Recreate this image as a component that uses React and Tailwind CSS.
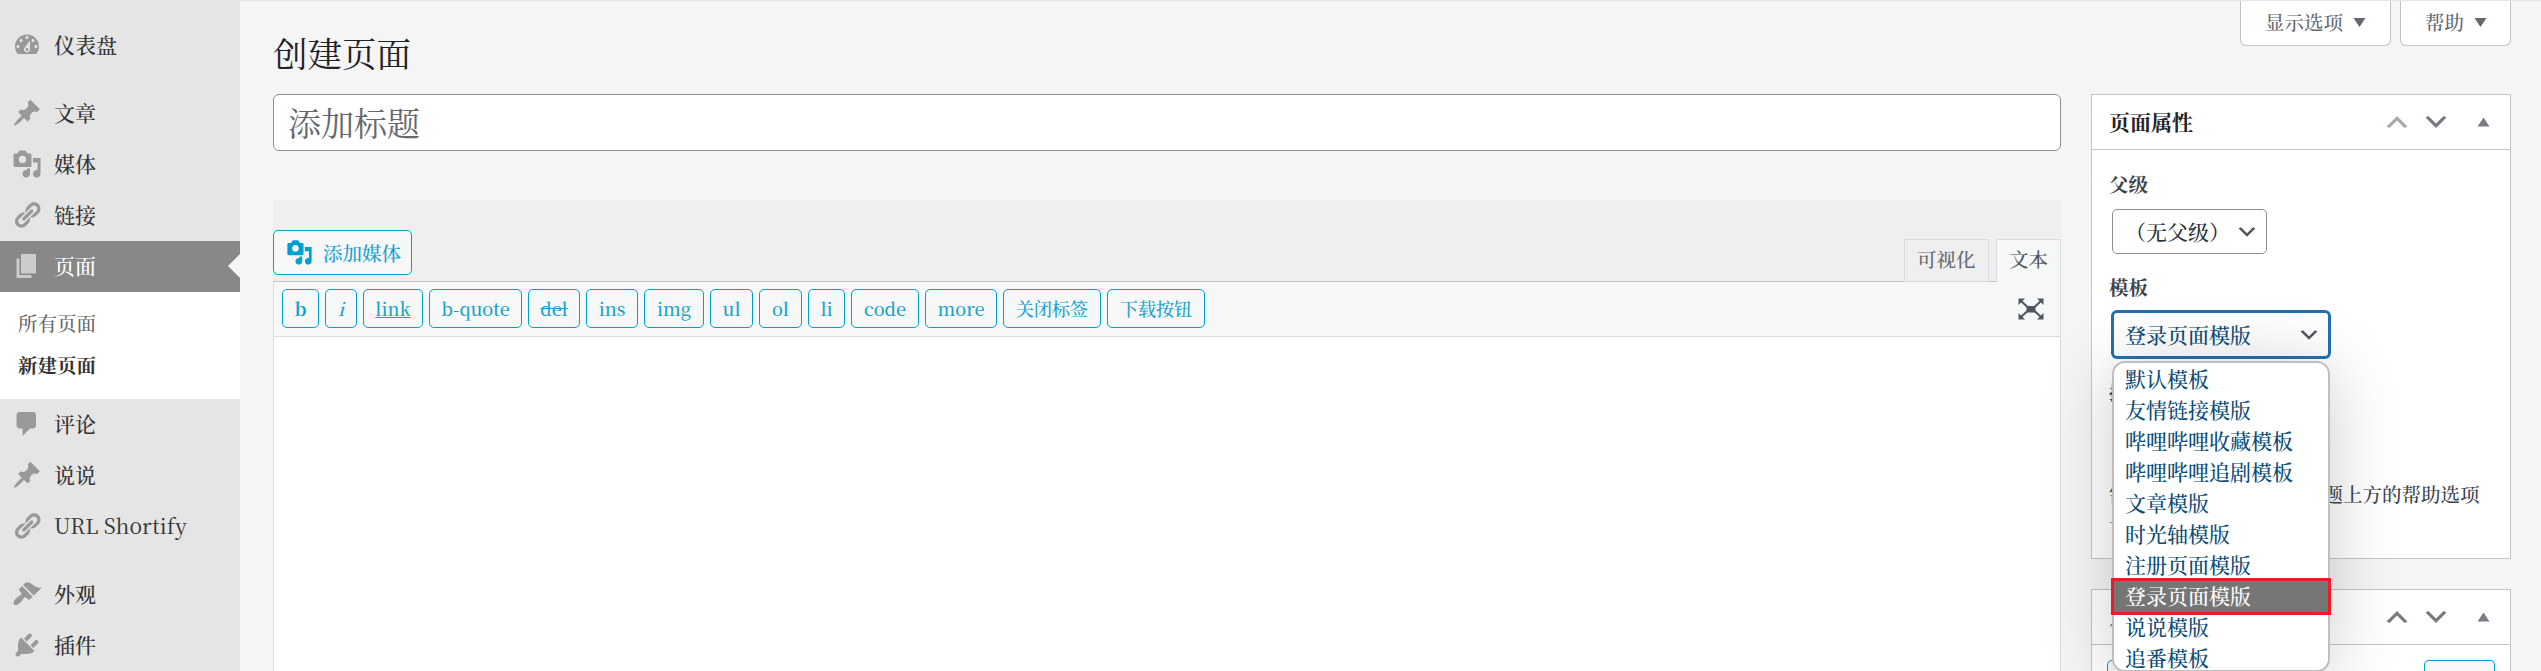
const PATHS = {
  dashboard:
    "M3.76 16h12.48c1.1-1.37 1.76-3.11 1.76-5 0-4.42-3.58-8-8-8s-8 3.58-8 8c0 1.89.66 3.63 1.76 5zM10 4c.55 0 1 .45 1 1s-.45 1-1 1-1-.45-1-1 .45-1 1-1zM6 6c.55 0 1 .45 1 1s-.45 1-1 1-1-.45-1-1 .45-1 1-1zm8 0c.55 0 1 .45 1 1s-.45 1-1 1-1-.45-1-1 .45-1 1-1zm-5.37 5.55L12 7v6c0 1.1-.9 2-2 2s-2-.9-2-2c0-.57.24-1.08.63-1.45zM4 10c.55 0 1 .45 1 1s-.45 1-1 1-1-.45-1-1 .45-1 1-1zm12 0c.55 0 1 .45 1 1s-.45 1-1 1-1-.45-1-1 .45-1 1-1zm-5 3c0-.55-.45-1-1-1s-1 .45-1 1 .45 1 1 1 1-.45 1-1z",
  pin: "M10.44 3.02l1.82-1.82 6.36 6.35-1.83 1.82c-1.05-.68-2.48-.57-3.41.36l-.75.75c-.92.93-1.04 2.35-.35 3.41l-1.83 1.82-2.41-2.41-2.8 2.79c-.42.42-3.38 2.71-3.8 2.29s1.86-3.39 2.28-3.81l2.79-2.79L4.1 9.36l1.83-1.82c1.05.69 2.48.57 3.4-.36l.75-.75c.93-.92 1.05-2.35.36-3.41z",
  media:
    "M13 11V4c0-.55-.45-1-1-1h-1.67L9 1H5L3.67 3H2c-.55 0-1 .45-1 1v7c0 .55.45 1 1 1h10c.55 0 1-.45 1-1zM7 4.5c1.38 0 2.5 1.12 2.5 2.5S8.38 9.5 7 9.5 4.5 8.38 4.5 7 5.62 4.5 7 4.5zM14 6h5v10.5c0 1.38-1.12 2.5-2.5 2.5S14 17.88 14 16.5s1.12-2.5 2.5-2.5c.17 0 .34.02.5.05V9h-3V6zm-4 8.05V13h2v3.5c0 1.38-1.12 2.5-2.5 2.5S7 17.88 7 16.5 8.12 14 9.5 14c.17 0 .34.02.5.05z",
  link: "M17.74 2.76c1.68 1.69 1.68 4.41 0 6.1l-1.53 1.52c-1.12 1.12-2.7 1.47-4.14 1.09l2.62-2.61.76-.77.76-.76c.84-.84.84-2.2 0-3.04-.84-.85-2.2-.85-3.04 0l-.77.76-3.38 3.38c-.37-1.44-.02-3.02 1.1-4.14l1.52-1.53c1.69-1.68 4.42-1.68 6.1 0zM8.59 13.43l5.34-5.34c.42-.42.42-1.1 0-1.52-.44-.43-1.13-.39-1.53 0l-5.33 5.34c-.42.42-.42 1.1 0 1.52.44.43 1.13.39 1.52 0zm-.76 2.29l4.14-4.15c.38 1.44.03 3.02-1.09 4.14l-1.52 1.53c-1.69 1.68-4.41 1.68-6.1 0-1.68-1.68-1.68-4.42 0-6.1l1.53-1.52c1.12-1.12 2.7-1.47 4.14-1.1l-4.14 4.15c-.85.84-.85 2.2 0 3.05.84.84 2.2.84 3.04 0z",
  page: "M6 15V2h10v13H6zm-1 1h8v2H3V5h2v11z",
  comment:
    "M5 2h9c1.1 0 2 .9 2 2v7c0 1.1-.9 2-2 2h-2l-5 5v-5H5c-1.1 0-2-.9-2-2V4c0-1.1.9-2 2-2z",
  brush:
    "M14.48 11.06L7.41 3.99l1.5-1.5c.5-.56 2.3-.47 3.51.32 1.21.8 1.43 1.28 2.91 2.1 1.18.64 2.45 1.26 4.45.85zm-.71.71L6.7 4.7 4.93 6.47c-.39.39-.39 1.02 0 1.41l1.06 1.06c.39.39.39 1.03 0 1.42-.6.6-1.43 1.11-2.21 1.69-.35.26-.7.53-1.01.84C1.43 14.23.4 16.08 1.4 17.07c.99 1 2.84-.03 4.18-1.36.31-.31.58-.66.85-1.02.57-.78 1.08-1.61 1.69-2.21.39-.39 1.02-.39 1.41 0l1.06 1.06c.39.39 1.02.39 1.41 0z",
  plug: "M13.11 4.36L9.87 7.6 8 5.73l3.24-3.24c.35-.34 1.05-.2 1.56.32.52.51.66 1.21.31 1.55zm-8 1.77l.91-1.12 9.01 9.01-1.19.84c-.71.71-2.63 1.16-3.82 1.16H6.14L4.9 17.26c-.59.59-1.54.59-2.12 0-.59-.58-.59-1.53 0-2.12l1.24-1.24v-3.88c0-1.13.4-3.19 1.09-3.89zm7.26 3.97l3.24-3.24c.34-.35 1.04-.21 1.55.31.52.51.66 1.21.31 1.55l-3.24 3.25z",
  down: "M5 6l5 5 5-5 2 1-7 7-7-7z",
  up: "M15 14l-5-5-5 5-2-1 7-7 7 7z",
  caretUp: "M7 13l4.03-6L15 13H7z",
  caretDown: "M15 8l-4.03 6L7 8h8z",
};

function Icon({ name, className }) {
  return (
    <svg viewBox="0 0 20 20" fill="currentColor" className={className}>
      <path d={PATHS[name]} />
    </svg>
  );
}

function MenuItem({ icon, label, active }) {
  return (
    <div
      className={
        active
          ? "relative flex h-[51px] items-center bg-[#888] pb-0.5 pl-3 text-white"
          : "flex h-[51px] items-center pb-0.5 pl-3 text-[#333]"
      }
    >
      <Icon
        name={icon}
        className={active ? "size-[30px] shrink-0 text-[#ccc]" : "size-[30px] shrink-0 text-[#999]"}
      />
      <span className="ml-3 text-[21px] leading-[27px]">{label}</span>
      {active && (
        <svg viewBox="0 0 12 24" className="absolute top-[13px] right-0 h-6 w-3" fill="#f5f5f5">
          <path d="M12 0v24L0 12z" />
        </svg>
      )}
    </div>
  );
}

function Sidebar() {
  return (
    <aside className="h-full w-60 shrink-0 bg-[#e5e5e5] pt-5">
      <MenuItem icon="dashboard" label="仪表盘" />
      <div className="h-[17px]" />
      <MenuItem icon="pin" label="文章" />
      <MenuItem icon="media" label="媒体" />
      <MenuItem icon="link" label="链接" />
      <MenuItem icon="page" label="页面" active />
      <div className="h-[107px] bg-white pt-2.5 pl-[18px] text-[19.5px] leading-[42px]">
        <div className="text-[#686868]">所有页面</div>
        <div className="font-bold text-[#333]">新建页面</div>
      </div>
      <MenuItem icon="comment" label="评论" />
      <MenuItem icon="pin" label="说说" />
      <MenuItem icon="link" label={<span className="font-normal">URL Shortify</span>} />
      <div className="h-[17px]" />
      <MenuItem icon="brush" label="外观" />
      <MenuItem icon="plug" label="插件" />
    </aside>
  );
}

const QUICKTAGS = [
  { label: "b", className: "w-[37px] font-bold" },
  { label: "i", className: "w-8 italic" },
  { label: "link", className: "w-[60px] underline" },
  { label: "b-quote", className: "w-[93px]" },
  { label: "del", className: "w-[52px] line-through" },
  { label: "ins", className: "w-[52px]" },
  { label: "img", className: "w-[60px]" },
  { label: "ul", className: "w-[43px]" },
  { label: "ol", className: "w-[43px]" },
  { label: "li", className: "w-[37px]" },
  { label: "code", className: "w-[68px]" },
  { label: "more", className: "w-[72px]" },
  { label: "关闭标签", className: "w-[98px]" },
  { label: "下载按钮", className: "w-[98px]" },
];

function Editor() {
  return (
    <section className="mt-[49px] flex flex-1 flex-col">
      <div className="flex h-[81px] shrink-0 justify-between bg-[#efefef]">
        <button className="mt-[30px] flex h-[45px] w-[139px] items-center rounded-[5px] border border-[#00a0d2] bg-[#f6f7f7] pl-3 text-[19.5px] text-[#16a2cf]">
          <Icon name="media" className="size-[27px] text-[#00a0d2]" />
          <span className="ml-2.5 leading-7 whitespace-nowrap">添加媒体</span>
        </button>
        <div className="z-10 mt-[39px] flex h-[43px] gap-[7px] text-[19.5px] leading-[39px]">
          <div className="w-[85px] border border-[#dcdcde] bg-[#efefef] pl-3 text-[#646970]">可视化</div>
          <div className="w-[65px] border border-b-0 border-[#dcdcde] bg-[#f6f7f7] pl-3 text-[#50575e]">文本</div>
        </div>
      </div>
      <div className="flex-1 border border-b-0 border-[#dcdcde] border-t-[#c3c4c7] bg-white">
        <div className="flex h-[55px] justify-between border-b border-[#dcdcde] bg-[#f6f7f7] pt-[7px] pr-4 pl-2">
          <div className="flex gap-1.5">
            {QUICKTAGS.map((t) => (
              <button
                key={t.label}
                className={`h-[39px] rounded-[5px] border border-[#00a0d2] text-center text-lg leading-[37px] whitespace-nowrap text-[#16a2cf] ${t.className}`}
              >
                {t.label}
              </button>
            ))}
          </div>
          <svg viewBox="0 0 26 22" className="mt-[9px] h-[22px] w-[26px] text-[#50575e]" fill="currentColor">
            <path d="M8.5 8h9v6.5h-9z" />
            <path d="M.5.5H7L.5 7zM25.5.5H19L25.5 7zM.5 21.5H7L.5 15zM25.5 21.5H19l6.5-6.5z" />
            <path d="M3 3l6.5 6M23 3l-6.5 6M3 19l6.5-6M23 19l-6.5-6" fill="none" stroke="currentColor" strokeWidth="2" />
          </svg>
        </div>
      </div>
    </section>
  );
}

function BoxHeader({ title, upClass }) {
  return (
    <header className="flex h-[55px] shrink-0 items-center border-b border-[#c3c4c7] pl-[17px]">
      <h2 className="flex-1 text-[21px] font-bold text-[#1d2327]">{title}</h2>
      <Icon name="up" className={`size-[30px] ${upClass}`} />
      <Icon name="down" className="ml-[9px] size-[30px] text-[#787c82]" />
      <Icon name="caretUp" className="mr-[13px] ml-4 size-[30px] text-[#787c82]" />
    </header>
  );
}

const TEMPLATES = [
  "默认模板",
  "友情链接模版",
  "哔哩哔哩收藏模板",
  "哔哩哔哩追剧模板",
  "文章模版",
  "时光轴模版",
  "注册页面模版",
  "登录页面模版",
  "说说模版",
  "追番模板",
];
const SELECTED = "登录页面模版";

function TemplateMenu() {
  return (
    <ul className="absolute top-[51px] left-px z-20 h-[311px] w-[218px] rounded-[13px] border-2 border-[#bfbfbf] bg-white pt-px text-[21px] leading-[29px] text-[#0a4b78] shadow-[0_6px_70px_rgba(0,0,0,0.2)]">
      {TEMPLATES.map((t) =>
        t === SELECTED ? (
          <li key={t} className="relative h-[31px] bg-[#767676] pl-[11px] text-white outline-3 outline-[#ed1c24]">
            {t}
          </li>
        ) : (
          <li key={t} className="h-[31px] pl-[11px]">
            {t}
          </li>
        )
      )}
    </ul>
  );
}

function SideColumn() {
  return (
    <div className="flex w-[420px] shrink-0 flex-col">
      <section className="h-[465px] shrink-0 border border-[#c3c4c7] bg-white">
        <BoxHeader title="页面属性" upClass="text-[#a7aaad]" />
        <div className="px-[17px] text-[19.5px] text-[#3c434a]">
          <div className="pt-5 leading-[29px] font-bold">父级</div>
          <div className="mt-2.5 ml-[3px] flex h-[45px] w-[155px] items-center rounded-[5px] border border-[#8c8f94] pl-3 text-[21px] text-[#2c3338]">
            <span className="w-[105px] whitespace-nowrap">（无父级）</span>
            <Icon name="down" className="ml-[5px] size-6 shrink-0 text-[#50575e]" />
          </div>
          <div className="mt-[19px] leading-[29px] font-bold">模板</div>
          <div className="relative mt-2 ml-0.5 h-[49px] w-[220px]">
            <div className="flex h-[49px] items-center rounded-md border-[3px] border-[#2271b1] pr-[7px] pl-[11px] text-[21px] text-[#0a4b78]">
              <span className="flex-1 whitespace-nowrap">{SELECTED}</span>
              <Icon name="down" className="size-6 shrink-0 text-[#50575e]" />
            </div>
            <TemplateMenu />
          </div>
          <div className="mt-[19px] leading-[29px] font-bold">排序</div>
          <div className="mt-2.5 ml-[3px] h-[43px] w-[90px] rounded-[5px] border border-[#8c8f94]" />
          <p className="mt-5 leading-[29px] whitespace-pre-line">
            {"需要帮助吗？使用屏幕标题上方的帮助选项\n卡。"}
          </p>
        </div>
      </section>
      <section className="mt-[30px] flex-1 border border-b-0 border-[#c3c4c7] bg-white">
        <BoxHeader title="发布" upClass="text-[#787c82]" />
        <div className="flex justify-between px-[15px] pt-[15px]">
          <div className="h-[30px] w-[105px] rounded-t-[5px] border border-b-0 border-[#00a0d2] bg-[#f6f7f7]" />
          <div className="h-[30px] w-[71px] rounded-t-[5px] border border-b-0 border-[#00a0d2] bg-[#f6f7f7]" />
        </div>
      </section>
    </div>
  );
}

function ScreenTab({ label, className }) {
  return (
    <button
      className={`flex h-[45px] items-center rounded-b-md border border-t-0 border-[#c3c4c7] bg-white text-[19.5px] whitespace-nowrap text-[#646970] ${className}`}
    >
      {label}
      <Icon name="caretDown" className="mb-1 size-[30px]" />
    </button>
  );
}

export default function App() {
  return (
    <div className="flex h-[671px] w-[2541px] overflow-hidden bg-[#f5f5f5] font-['Noto_Serif_CJK_SC','Noto_Serif_SC','Noto_Sans_CJK_SC',serif] font-medium">
      <Sidebar />
      <main className="flex flex-1 flex-col border-t border-[#e5e5e5] pr-[30px] pl-[33px]">
        <div className="flex h-[93px] shrink-0 items-start justify-between">
          <h1 className="pt-[29px] text-[34.5px] leading-[45px] font-normal text-[#1d2327]">创建页面</h1>
          <div className="flex gap-[9px]">
            <ScreenTab label="显示选项" className="w-[151px] pl-6" />
            <ScreenTab label="帮助" className="w-[111px] pl-6" />
          </div>
        </div>
        <div className="flex min-h-0 flex-1">
          <div className="mr-[30px] flex w-[1788px] shrink-0 flex-col">
            <div className="h-[57px] shrink-0 rounded-md border border-[#8c8f94] bg-white pl-3.5 text-[33px] leading-[53px] font-normal text-[#646970]">
              添加标题
            </div>
            <Editor />
          </div>
          <SideColumn />
        </div>
      </main>
    </div>
  );
}
